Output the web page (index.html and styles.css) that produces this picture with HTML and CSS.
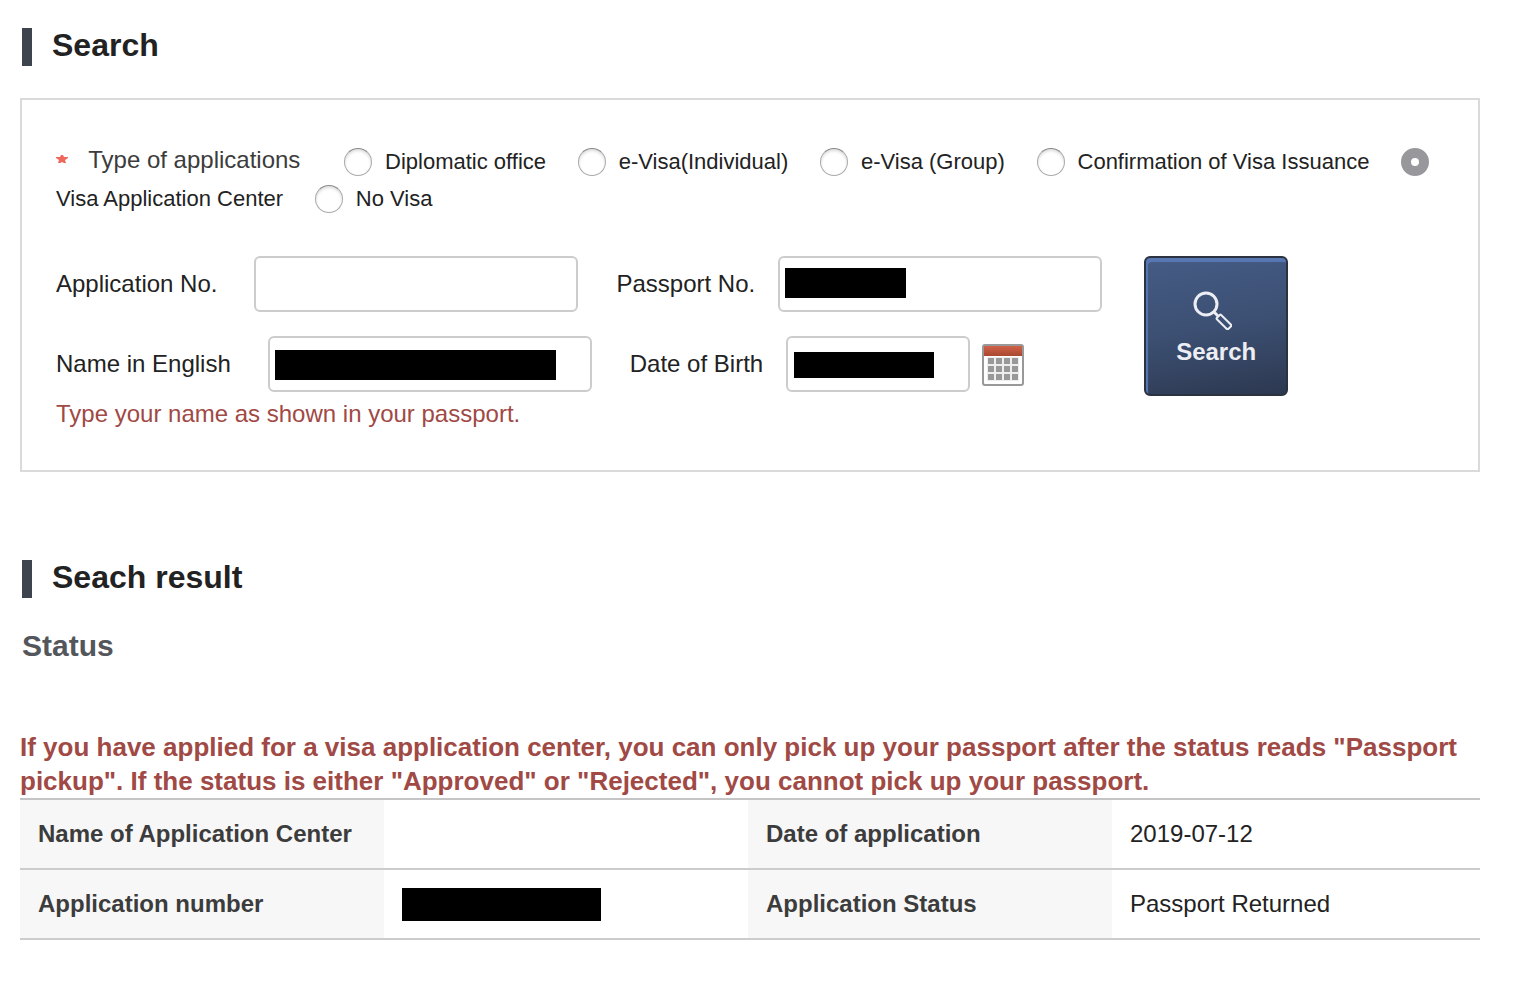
FILE: index.html
```html
<!DOCTYPE html>
<html lang="en">

<head>
    <meta charset="UTF-8">
    <meta name="viewport" content="width=device-width, initial-scale=1.0">
    <title>Check Application Status</title>
    <link rel="stylesheet" href="styles.css">
</head>

<body>
    <main class="page">
        <h2 class="title">Search</h2>

        <form class="search-box">
            <div class="type-list" role="radiogroup" aria-labelledby="type-title">
                <svg class="required" viewBox="0 0 12 10" aria-hidden="true">
                    <path d="M5 1h2l1 2h4v1L9 6l1 3H8L6 8 4 9H2l1-3-3-2V3h4z" fill="#f0675c" />
                </svg>
                <span class="type-title" id="type-title">Type of applications</span>
                <input class="radio" type="radio" name="type" id="type1"><label class="radio-label" for="type1">Diplomatic office</label>
                <input class="radio" type="radio" name="type" id="type2"><label class="radio-label" for="type2">e-Visa(Individual)</label>
                <input class="radio" type="radio" name="type" id="type3"><label class="radio-label" for="type3">e-Visa (Group)</label>
                <input class="radio" type="radio" name="type" id="type4"><label class="radio-label" for="type4">Confirmation of Visa Issuance</label>
                <input class="radio" type="radio" name="type" id="type5" checked>
                <label class="radio-label" for="type5">Visa Application Center</label>
                <input class="radio" type="radio" name="type" id="type6"><label class="radio-label" for="type6">No Visa</label>
            </div>

            <div class="search-form">
                <div class="fields">
                    <div class="row">
                        <label class="label" for="appno">Application No.</label>
                        <span class="field"><input class="input" type="text" id="appno"></span>
                        <label class="label label-right" for="passport">Passport No.</label>
                        <span class="field"><input class="input" type="text" id="passport"><span class="mask mask-passport"></span></span>
                    </div>
                    <div class="row">
                        <label class="label" for="name">Name in English</label>
                        <span class="field"><input class="input" type="text" id="name"><span class="mask mask-name"></span></span>
                        <label class="label label-right" for="birth">Date of Birth</label>
                        <span class="field"><input class="input input-date" type="text" id="birth"><span class="mask mask-birth"></span></span>
                        <button class="calendar" type="button" aria-label="Calendar">
                            <svg viewBox="0 0 42 42" width="42" height="42">
                                <defs>
                                    <linearGradient id="cal" x1="0" y1="0" x2="0" y2="1">
                                        <stop offset="0" stop-color="#d0624a" />
                                        <stop offset="1" stop-color="#a8482f" />
                                    </linearGradient>
                                </defs>
                                <rect x="1" y="1" width="40" height="40" rx="2" fill="#fff" stroke="#999" stroke-width="2" />
                                <path d="M2 2h38v10H2z" fill="url(#cal)" />
                                <path d="M5 13h32v24H5z" fill="#eee" />
                                <path d="M6 14h6v6H6zM14 14h6v6h-6zM22 14h6v6h-6zM30 14h6v6h-6zM6 22h6v6H6zM14 22h6v6h-6zM22 22h6v6h-6zM30 22h6v6h-6zM6 30h6v6H6zM14 30h6v6h-6zM22 30h6v6h-6zM30 30h6v6h-6z" fill="#999" />
                            </svg>
                        </button>
                    </div>
                </div>
                <button class="btn-search" type="submit">
                    <svg class="icon-search" viewBox="0 0 40 40" width="40" height="40" fill="none" stroke="#eceef3" aria-hidden="true">
                        <circle cx="14" cy="14" r="11" stroke-width="3" />
                        <path d="M21 21l5 5" stroke-width="3" />
                        <rect x="24" y="29" width="16" height="6" rx="1" stroke-width="2" transform="rotate(45 32 32)" />
                    </svg>
                    Search
                </button>
            </div>
            <p class="hint">Type your name as shown in your passport.</p>
        </form>

        <h2 class="title">Seach result</h2>
        <h3 class="subtitle">Status</h3>

        <p class="notice">If you have applied for a visa application center, you can only pick up your passport after the status reads "Passport pickup". If the status is either "Approved" or "Rejected", you cannot pick up your passport.</p>
        <table class="result">
            <tr>
                <th scope="row">Name of Application Center</th>
                <td></td>
                <th scope="row">Date of application</th>
                <td>2019-07-12</td>
            </tr>
            <tr>
                <th scope="row">Application number</th>
                <td><span class="mask-number"></span></td>
                <th scope="row">Application Status</th>
                <td>Passport Returned</td>
            </tr>
        </table>
    </main>
</body>

</html>
```
FILE: styles.css
```css
* {
    box-sizing: border-box;
}

body {
    margin: 0;
    background: #fff;
    color: #222;
    font-family: "Liberation Sans", Arial, sans-serif;
    font-size: 24px;
    line-height: 36px;
}

.page {
    padding: 28px 36px 40px 20px;
}

.title {
    margin: 0 0 32px 2px;
    padding-left: 20px;
    border-left: 10px solid #3d444d;
    font-size: 32px;
    line-height: 34px;
    padding-bottom: 4px;
}

.search-box {
    margin-bottom: 88px;
    padding: 42px 34px 38px;
    border: 2px solid #dadada;
}

/* application type */
.type-list {
    margin-bottom: 40px;
    line-height: 35px;
}

.required {
    width: 12px;
    height: 10px;
    margin-right: 14px;
    vertical-align: 4px;
}

.type-title {
    margin-right: 37px;
    color: #3c3c3c;
}

.radio {
    appearance: none;
    width: 28px;
    height: 28px;
    margin: 0;
    border: 1px solid #aaa;
    border-top-color: #888;
    border-radius: 50%;
    background: #fff;
    box-shadow: inset 0 2px 3px #ddd;
    vertical-align: middle;
}

.radio:checked {
    border: 10px solid #98979c;
    box-shadow: none;
}

.radio-label {
    margin-right: 25px;
    font-size: 22px;
    vertical-align: middle;
}

.radio + .radio-label {
    padding-left: 13px;
}

#type5 + .radio-label {
    padding-left: 0;
}

/* fields */
.search-form {
    display: flex;
    gap: 42px;
}

.fields {
    display: flex;
    flex-direction: column;
    gap: 24px;
}

.row {
    display: flex;
    align-items: center;
}

.label {
    margin-right: 37px;
}

.label-right {
    margin: 0 23px 0 38px;
}

.field {
    display: flex;
    position: relative;
}

.input {
    width: 324px;
    height: 56px;
    padding: 0 8px;
    border: 2px solid #ccc;
    border-radius: 6px;
    background: #fff;
    font: inherit;
}

.input-date {
    width: 184px;
}

.mask {
    position: absolute;
    top: 12px;
    left: 7px;
    height: 30px;
    background: #000;
}

.mask-passport {
    width: 121px;
}

.mask-name {
    top: 14px;
    width: 281px;
}

.mask-birth {
    top: 16px;
    left: 8px;
    width: 140px;
    height: 26px;
}

.calendar {
    display: flex;
    margin-left: 12px;
    padding: 2px 0 0;
    border: 0;
    background: none;
}

.btn-search {
    display: flex;
    flex-direction: column;
    align-items: center;
    justify-content: center;
    gap: 4px;
    width: 144px;
    height: 140px;
    padding: 8px 0 0;
    border: 2px solid #2c3340;
    border-radius: 6px;
    background: linear-gradient(170deg, #465b85, #3c5073 50%, #2d3850);
    box-shadow: inset 2px 4px 1px #5878b4;
    color: #eceef3;
    font: bold 24px/36px "Liberation Sans", Arial, sans-serif;
}

.icon-search {
    margin-right: 8px;
}

.hint {
    margin: 0;
    color: #a04945;
}

/* result */
.subtitle {
    margin: 0 0 68px 2px;
    color: #53565b;
    font-size: 30px;
    line-height: 32px;
}

.notice {
    margin: 0;
    color: #a04945;
    font-size: 26px;
    font-weight: bold;
    line-height: 34px;
}

.result {
    width: 100%;
    border-collapse: collapse;
    border-top: 2px solid #c4c4c4;
    table-layout: fixed;
}

.result th,
.result td {
    width: 364px;
    height: 70px;
    padding: 0 18px;
    border-bottom: 2px solid #ccc;
    text-align: left;
}

.result td:last-child {
    width: auto;
}

.result th {
    background: #f7f7f7;
    color: #3c3c3c;
}

.mask-number {
    display: block;
    width: 199px;
    height: 33px;
    background: #000;
}
```
